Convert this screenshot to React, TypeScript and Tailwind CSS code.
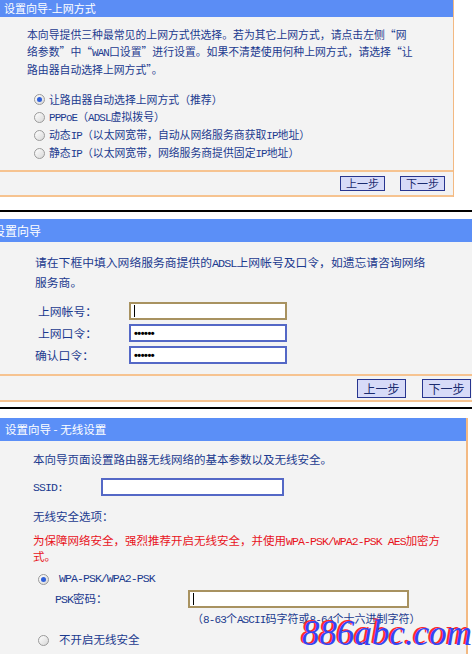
import React from 'react';

const FONT = '"Noto Sans CJK SC", "Liberation Sans", sans-serif';

const L: React.FC<{ children: React.ReactNode }> = ({ children }) => (
  <span className="font-['Liberation_Mono'] text-[1em] tracking-[-0.08em]">{children}</span>
);

const Radio: React.FC<{ checked?: boolean }> = ({ checked }) => (
  <span className="inline-flex w-[11px] h-[11px] rounded-full border border-[#9a9a9a] bg-gradient-to-br from-white to-[#d8d8d8] items-center justify-center shrink-0">
    {checked && <span className="w-[5px] h-[5px] rounded-full bg-[#2f5fd8]" />}
  </span>
);

const Btn: React.FC<{ label: string; big?: boolean }> = ({ label, big }) => (
  <div
    className={
      big
        ? 'w-[49px] h-[19px] border border-[#27358f] bg-[#d7dbf8] text-[12px] leading-[17px] text-[#1a2a6e] text-center'
        : 'w-[45px] h-[15px] border border-[#27358f] bg-[#d7dbf8] text-[11px] leading-[13px] text-[#1a2a6e] text-center'
    }
  >
    {label}
  </div>
);

const Input: React.FC<{ w: string; focused?: boolean; dots?: boolean }> = ({ w, focused, dots }) => (
  <div
    className={
      (focused ? 'border-2 border-[#a89260] ' : 'border-2 border-[#5468c6] ') +
      w +
      ' h-[18px] bg-white flex items-center pl-[3px]'
    }
  >
    {focused && <span className="w-[1px] h-[12px] bg-black" />}
    {dots && (
      <span className="font-['Liberation_Sans'] font-bold text-[11px] leading-none tracking-[-0.5px] text-black">
        ••••••
      </span>
    )}
  </div>
);

export default function App() {
  return (
    <div className="w-[472px] h-[654px] bg-white relative overflow-hidden" style={{ fontFamily: FONT }}>
      {/* panel 1 */}
      <div className="w-[454px] bg-[#f3f3f3] border-r border-[#f3b982]">
        <div className="h-[17px] bg-[#5b8df5] text-white text-[11px] leading-[17px] pl-[4px]">设置向导-上网方式</div>
        <div className="h-[153px] pt-[9px] pl-[27px] pr-[10px] text-[#1b3a8f]">
          <p className="text-[10.85px] leading-[16.5px] whitespace-nowrap">
            本向导提供三种最常见的上网方式供选择。若为其它上网方式，请点击左侧“网
            <br />
            络参数”中“<L>WAN</L>口设置”进行设置。如果不清楚使用何种上网方式，请选择“让
            <br />
            路由器自动选择上网方式”。
          </p>
          <div className="mt-[13px] pl-[7px] text-[10.85px]">
            <div className="h-[18px] flex items-center gap-[4px]"><Radio checked />让路由器自动选择上网方式（推荐）</div>
            <div className="h-[18px] flex items-center gap-[4px]"><Radio /><span><L>PPPoE</L>（<L>ADSL</L>虚拟拨号）</span></div>
            <div className="h-[18px] flex items-center gap-[4px]"><Radio /><span>动态<L>IP</L>（以太网宽带，自动从网络服务商获取<L>IP</L>地址）</span></div>
            <div className="h-[18px] flex items-center gap-[4px]"><Radio /><span>静态<L>IP</L>（以太网宽带，网络服务商提供固定<L>IP</L>地址）</span></div>
          </div>
        </div>
        <div className="h-[27px] border-y-2 border-[#f6c390] flex items-center justify-end gap-[15px] pr-[8px]">
          <Btn label="上一步" />
          <Btn label="下一步" />
        </div>
      </div>

      <div className="h-[13px]" />
      <div className="h-[2px] bg-black" />
      <div className="h-[7px]" />

      {/* panel 2 */}
      <div className="bg-[#f3f3f3]">
        <div className="h-[23px] bg-[#5b8ff7] text-white text-[12px] leading-[23px] overflow-hidden">
          <span className="ml-[-7px]">设置向导</span>
        </div>
        <div className="h-[132px] pt-[11px] pl-[35px] pr-[40px] text-[#1b3a8f] text-[11.8px]">
          <p className="leading-[18px]">请在下框中填入网络服务商提供的<L>ADSL</L>上网帐号及口令，如遗忘请咨询网络服务商。</p>
          <div className="mt-[11px]">
            <div className="h-[22px] flex items-start">
              <span className="w-[94px] pl-[3px] leading-[18px]">上网帐号：</span>
              <Input w="w-[158px]" focused />
            </div>
            <div className="h-[22px] flex items-start">
              <span className="w-[94px] pl-[3px] leading-[18px]">上网口令：</span>
              <Input w="w-[158px]" dots />
            </div>
            <div className="h-[22px] flex items-start">
              <span className="w-[94px] leading-[18px]">确认口令：</span>
              <Input w="w-[158px]" dots />
            </div>
          </div>
        </div>
        <div className="h-[28px] border-y-2 border-[#f6c390] flex items-center justify-end gap-[16px] pr-[1px]">
          <Btn label="上一步" big />
          <Btn label="下一步" big />
        </div>
      </div>

      <div className="h-[5px]" />
      <div className="h-[2px] bg-black" />
      <div className="h-[9px]" />

      {/* panel 3 */}
      <div className="w-[468px] h-[240px] bg-[#f3f3f3] border-r-2 border-[#f3b982]">
        <div className="h-[23px] bg-[#5b8ff7] text-white text-[11.5px] leading-[23px] pl-[5px]">设置向导 - 无线设置</div>
        <div className="pt-[10px] pl-[33px] pr-[20px] text-[#1b3a8f] text-[11.5px]">
          <p className="leading-[16px]">本向导页面设置路由器无线网络的基本参数以及无线安全。</p>
          <div className="mt-[11px] h-[18px] flex items-center">
            <span className="w-[68px]"><L>SSID:</L></span>
            <Input w="w-[183px]" />
          </div>
          <p className="mt-[12px] leading-[16px]">无线安全选项：</p>
          <p className="mt-[9px] leading-[15px] text-[#e8141c]">
            为保障网络安全，强烈推荐开启无线安全，并使用<L>WPA-PSK/WPA2-PSK AES</L>加密方式。
          </p>
          <div className="mt-[7px] h-[16px] flex items-center pl-[5px] gap-[10px]">
            <Radio checked />
            <L>WPA-PSK/WPA2-PSK</L>
          </div>
          <div className="mt-[3px] h-[18px] flex items-center pl-[22px]">
            <span className="w-[133px]"><L>PSK</L>密码：</span>
            <Input w="w-[221px]" focused />
          </div>
          <p className="mt-[2px] leading-[16px] pl-[159px] text-[11px]">（<L>8-63</L>个<L>ASCII</L>码字符或<L>8-64</L>个十六进制字符）</p>
          <div className="mt-[4px] h-[16px] flex items-center pl-[5px] gap-[10px]">
            <Radio />
            不开启无线安全
          </div>
        </div>
      </div>

      <div className="absolute left-[302px] top-[616px] font-['Liberation_Serif'] italic text-[35px] leading-none text-[#3346f2] [text-shadow:-2px_-1px_0_#ff2a2a]">
        886abc.com
      </div>
    </div>
  );
}
